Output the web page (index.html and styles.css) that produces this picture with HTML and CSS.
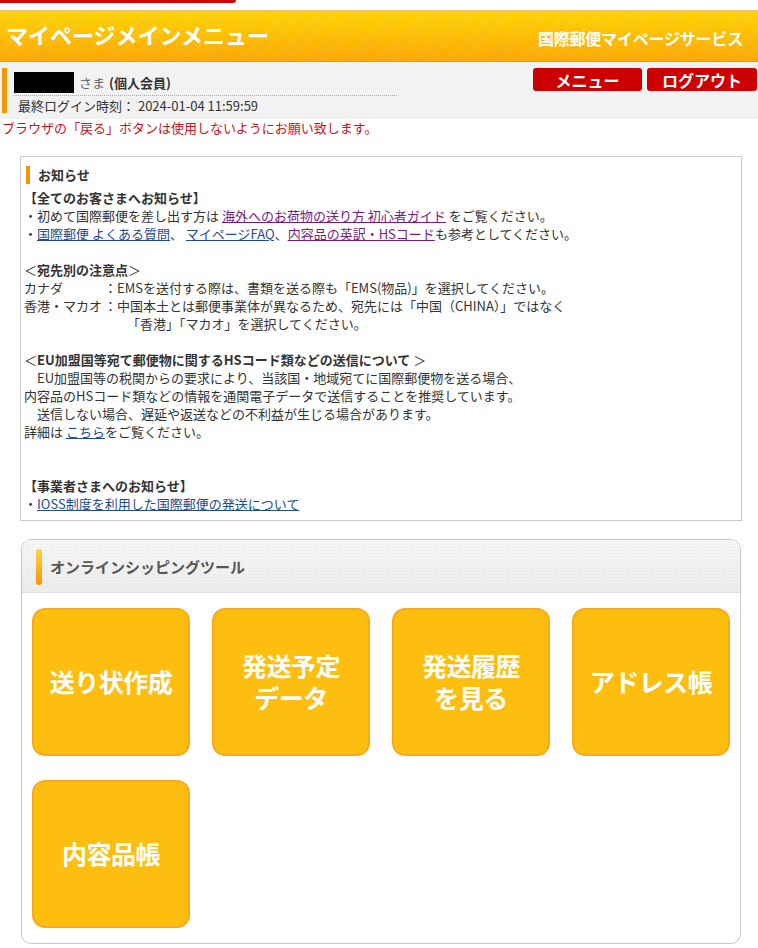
FILE: index.html
```html
<!DOCTYPE html>
<html lang="ja">
<head>
<meta charset="utf-8">
<title>マイページメインメニュー</title>
<link rel="stylesheet" href="styles.css">
</head>
<body>
<div class="topbar"></div>
<header class="header">
  <h1 class="title">マイページメインメニュー</h1>
  <div class="service">国際郵便マイページサービス</div>
</header>
<div class="userbar">
  <div class="userinfo">
    <div class="userrow"><span class="masked"></span><span class="sama">さま</span> <b>(個人会員)</b></div>
    <div class="lastlogin">最終ログイン時刻： 2024-01-04 11:59:59</div>
  </div>
  <div class="btns">
    <a class="btn" href="#">メニュー</a>
    <a class="btn" href="#">ログアウト</a>
  </div>
</div>
<p class="warning">ブラウザの「戻る」ボタンは使用しないようにお願い致します。</p>

<section class="notice">
  <h2 class="notice-title">お知らせ</h2>
  <div class="line b">【全てのお客さまへお知らせ】</div>
  <div class="line">・初めて国際郵便を差し出す方は <a class="visited" href="#">海外へのお荷物の送り方 初心者ガイド</a> をご覧ください。</div>
  <div class="line">・<a href="#">国際郵便 よくある質問</a>、 <a href="#">マイページFAQ</a>、<a class="visited" href="#">内容品の英訳・HSコード</a>も参考としてください。</div>
  <div class="line">&nbsp;</div>
  <div class="line">＜<b>宛先別の注意点</b>＞</div>
  <div class="line"><span class="lbl">カナダ</span>：EMSを送付する際は、書類を送る際も「EMS(物品)」を選択してください。</div>
  <div class="line"><span class="lbl">香港・マカオ</span>：中国本土とは郵便事業体が異なるため、宛先には「中国（CHINA）」ではなく</div>
  <div class="line indent">「香港」「マカオ」を選択してください。</div>
  <div class="line">&nbsp;</div>
  <div class="line">＜<b>EU加盟国等宛て郵便物に関するHSコード類などの送信について</b> ＞</div>
  <div class="line">　EU加盟国等の税関からの要求により、当該国・地域宛てに国際郵便物を送る場合、</div>
  <div class="line">内容品のHSコード類などの情報を通関電子データで送信することを推奨しています。</div>
  <div class="line">　送信しない場合、遅延や返送などの不利益が生じる場合があります。</div>
  <div class="line">詳細は <a href="#">こちら</a>をご覧ください。</div>
  <div class="line">&nbsp;</div>
  <div class="line">&nbsp;</div>
  <div class="line b">【事業者さまへのお知らせ】</div>
  <div class="line">・<a href="#">IOSS制度を利用した国際郵便の発送について</a></div>
</section>

<section class="tools">
  <div class="tools-head"><span class="tools-bar"></span><h2 class="tools-title">オンラインシッピングツール</h2></div>
  <div class="tiles">
    <a class="tile" href="#">送り状作成</a>
    <a class="tile" href="#">発送予定<br>データ</a>
    <a class="tile" href="#">発送履歴<br>を見る</a>
    <a class="tile" href="#">アドレス帳</a>
    <a class="tile" href="#">内容品帳</a>
  </div>
</section>
</body>
</html>
```
FILE: styles.css
```css
* { box-sizing: border-box; }
html, body { margin: 0; padding: 0; background: #fff; }
body {
  font-family: "Noto Sans CJK JP", "Noto Sans", sans-serif;
  font-size: 13px;
  color: #333;
  width: 758px;
}
a { text-decoration: none; }

.topbar {
  width: 236px;
  height: 3px;
  background: #cc0000;
  border-bottom-right-radius: 4px;
}

.header {
  margin-top: 7px;
  height: 52px;
  border-top: 1px solid #efc27a;
  border-bottom: 1px solid #e19b2c;
  background:
    repeating-linear-gradient(-45deg, rgba(255,255,255,0.10) 0 1px, rgba(255,255,255,0) 1px 3px),
    linear-gradient(#ffd200, #fba600);
  display: flex;
  justify-content: space-between;
  align-items: center;
  padding: 0 15px 0 6px;
}
.title {
  margin: 0;
  font-size: 22px;
  font-weight: bold;
  color: #fff;
  line-height: 1;
  position: relative;
  top: -2px;
}
.service {
  font-size: 16px;
  font-weight: bold;
  color: #fff;
  line-height: 1;
  position: relative;
  top: 2px;
  letter-spacing: -0.2px;
}

.userbar {
  background: #f2f2f2;
  height: 57px;
  display: flex;
  justify-content: space-between;
  padding: 6px 1px 0 2px;
}
.userinfo {
  border-left: 5px solid #f39800;
  height: 45px;
  width: 395px;
  padding-left: 7px;
}
.userrow {
  height: 28px;
  display: flex;
  align-items: center;
  padding-top: 2px;
  border-bottom: 1px dotted #aaa;
}
.masked {
  display: inline-block;
  width: 60px;
  height: 21px;
  background: #000;
  margin-right: 5px;
}
.sama { color: #666; margin-right: 4px; }
.userrow b { color: #333; }
.lastlogin {
  padding-left: 4px;
  line-height: 17px;
  margin-top: 1px;
  color: #333;
}
.btns { display: flex; gap: 5px; align-items: flex-start; }
.btn {
  display: flex;
  align-items: center;
  justify-content: center;
  height: 23px;
  width: 109px;
  background: #cc0000;
  color: #fff;
  font-weight: bold;
  font-size: 16px;
  border-radius: 3px;
  line-height: 1;
}
.btn + .btn { width: 110px; }

.warning {
  margin: 0;
  padding: 0 0 0 2px;
  color: #c8141e;
  font-size: 13px;
  line-height: 18px;
}

.notice {
  margin: 19px 16px 0 20px;
  border: 1px solid #ccc;
  padding: 9px 3px 7px 3px;
  height: 365px;
}
.notice-title {
  margin: 0 0 5px 2px;
  font-size: 13px;
  font-weight: bold;
  color: #333;
  line-height: 18px;
  border-left: 4px solid #f39800;
  padding-left: 8px;
}
.line { line-height: 18px; white-space: nowrap; }
.line.b { font-weight: bold; }
.line a { color: #1d4c8f; text-decoration: underline; }
.line a.visited { color: #7a1b7c; }
.lbl { display: inline-block; width: 80px; }
.indent { padding-left: 103px; }

.tools {
  margin: 18px 17px 4px 21px;
  border: 1px solid #c8c8c8;
  border-radius: 10px;
  overflow: hidden;
  height: 405px;
}
.tools-head {
  height: 53px;
  background:
    radial-gradient(rgba(0,0,0,0.05) 0.5px, transparent 0.8px) 0 0 / 3px 3px,
    linear-gradient(#f7f7f7, #ececec);
  border-bottom: 1px solid #dedede;
  display: flex;
  align-items: center;
  padding-left: 14px;
}
.tools-bar {
  width: 6px;
  height: 36px;
  border-radius: 3px;
  background: linear-gradient(#ffd34a, #f39800);
  margin-right: 8px;
  margin-top: 2px;
}
.tools-title {
  margin: 0;
  font-size: 15px;
  font-weight: bold;
  color: #555;
  line-height: 1;
}
.tiles {
  display: grid;
  grid-template-columns: repeat(4, 158px);
  column-gap: 22px;
  row-gap: 24px;
  padding: 15px 0 0 10px;
}
.tile {
  height: 148px;
  background: #fdbe10;
  border: 2px solid #f8aa1c;
  border-radius: 13px;
  color: #fff;
  font-weight: bold;
  font-size: 25px;
  line-height: 32px;
  display: flex;
  align-items: center;
  justify-content: center;
  text-align: center;
  letter-spacing: -0.5px;
  padding-bottom: 2px;
}
```
